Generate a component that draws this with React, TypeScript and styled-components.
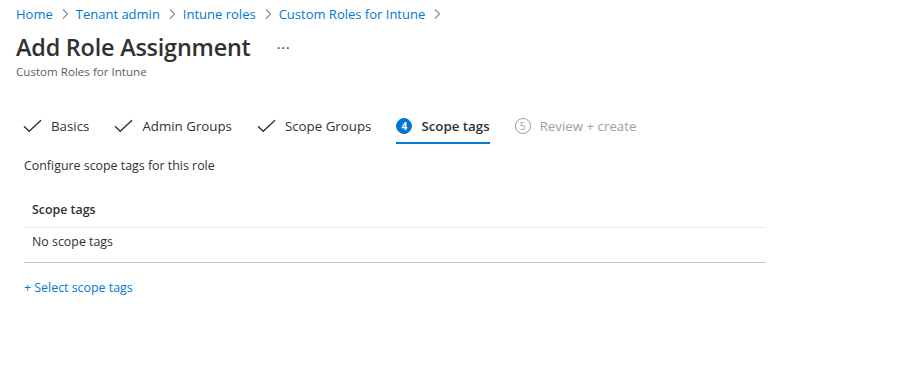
import styled, { createGlobalStyle } from 'styled-components';

const GlobalStyle = createGlobalStyle`
  body {
    margin: 0;
    background: #fff;
    font-family: "Open Sans", "Noto Sans", sans-serif;
    color: #323130;
  }
`;

type StepState = 'done' | 'active' | 'todo';

const steps: { label: string; state: StepState; num: number }[] = [
  { label: 'Basics', state: 'done', num: 1 },
  { label: 'Admin Groups', state: 'done', num: 2 },
  { label: 'Scope Groups', state: 'done', num: 3 },
  { label: 'Scope tags', state: 'active', num: 4 },
  { label: 'Review + create', state: 'todo', num: 5 },
];

const crumbs = ['Home', 'Tenant admin', 'Intune roles', 'Custom Roles for Intune'];

const CheckIcon = () => (
  <svg width="19" height="14" viewBox="0 0 19 14" fill="none">
    <path d="M1 7.2 L6.2 12.2 L18 1.2" stroke="#323130" strokeWidth="1.4" />
  </svg>
);

const Chevron = () => (
  <svg width="8" height="12" viewBox="0 0 8 12" fill="none">
    <path d="M2 1.5 L6.5 6 L2 10.5" stroke="#8a8886" strokeWidth="1.1" />
  </svg>
);

const App = () => {
  return (
    <>
      <GlobalStyle />
      <Page>
        <Breadcrumb>
          {crumbs.map(c => (
            <Crumb key={c}>
              <CrumbLink>{c}</CrumbLink>
              <Chevron />
            </Crumb>
          ))}
        </Breadcrumb>
        <TitleRow>
          <Title>Add Role Assignment</Title>
          <More>···</More>
        </TitleRow>
        <Subtitle>Custom Roles for Intune</Subtitle>

        <Tabs>
          {steps.map(s => (
            <Tab key={s.label} state={s.state}>
              {s.state === 'done'
                ? <CheckIcon />
                : <StepNum state={s.state}>{s.num}</StepNum>}
              <TabLabel state={s.state}>{s.label}</TabLabel>
            </Tab>
          ))}
        </Tabs>

        <Body>
          <Intro>Configure scope tags for this role</Intro>
          <Table>
            <HeaderCell>Scope tags</HeaderCell>
            <RowCell>No scope tags</RowCell>
          </Table>
          <AddLink>+ Select scope tags</AddLink>
        </Body>
      </Page>
    </>
  );
};

const Page = styled.div`
  padding: 0 16px;
`;

const Breadcrumb = styled.nav`
  display: flex;
  align-items: center;
  height: 28px;
  gap: 7px;
`;

const Crumb = styled.span`
  display: flex;
  align-items: center;
  gap: 8px;
`;

const CrumbLink = styled.a`
  color: #0078d4;
  font-size: 13px;
  cursor: pointer;
`;

const TitleRow = styled.div`
  display: flex;
  align-items: center;
  height: 36px;
  margin-top: 1px;
`;

const Title = styled.h1`
  margin: 0;
  font-size: 23.4px;
  font-weight: 600;
  color: #323130;
  letter-spacing: -0.2px;
`;

const More = styled.span`
  margin-left: 26px;
  font-size: 14px;
  color: #323130;
  letter-spacing: 1px;
`;

const Subtitle = styled.div`
  font-size: 11.6px;
  color: #605e5c;
  height: 14px;
  line-height: 14px;
`;

const Tabs = styled.div`
  display: flex;
  align-items: stretch;
  gap: 25px;
  margin-top: 29px;
  padding-left: 7px;
  height: 36px;
`;

const Tab = styled.div<{ state: StepState }>`
  display: flex;
  align-items: center;
  gap: 9px;
  border-bottom: 2px solid ${({ state }) => state === 'active' ? '#0078d4' : 'transparent'};
  box-sizing: border-box;
  padding-top: 2px;
`;

const StepNum = styled.span<{ state: StepState }>`
  display: inline-flex;
  align-items: center;
  justify-content: center;
  width: 16px;
  height: 16px;
  box-sizing: border-box;
  border-radius: 50%;
  font-size: 10px;
  font-weight: ${({ state }) => state === 'active' ? 700 : 400};
  background: ${({ state }) => state === 'active' ? '#0078d4' : '#fff'};
  color: ${({ state }) => state === 'active' ? '#fff' : '#a19f9d'};
  border: 1px solid ${({ state }) => state === 'active' ? '#0078d4' : '#a19f9d'};
`;

const TabLabel = styled.span<{ state: StepState }>`
  font-size: 13.3px;
  font-weight: ${({ state }) => state === 'active' ? 600 : 400};
  color: ${({ state }) => state === 'todo' ? '#a19f9d' : '#323130'};
`;

const Body = styled.div`
  padding-left: 8px;
  width: 742px;
`;

const Intro = styled.div`
  font-size: 12.4px;
  margin-top: 13px;
  height: 18px;
  line-height: 18px;
`;

const Table = styled.div`
  margin-top: 17px;
  border-bottom: 1px solid #c8c6c4;
`;

const HeaderCell = styled.div`
  font-size: 12.4px;
  font-weight: 600;
  padding: 0 8px;
  height: 35px;
  line-height: 35px;
  border-bottom: 1px solid #edebe9;
`;

const RowCell = styled.div`
  font-size: 12.4px;
  padding: 0 8px;
  height: 34px;
  line-height: 27px;
`;

const AddLink = styled.a`
  display: block;
  margin-top: 16px;
  font-size: 12.4px;
  color: #0078d4;
  cursor: pointer;
`;

export default App;
